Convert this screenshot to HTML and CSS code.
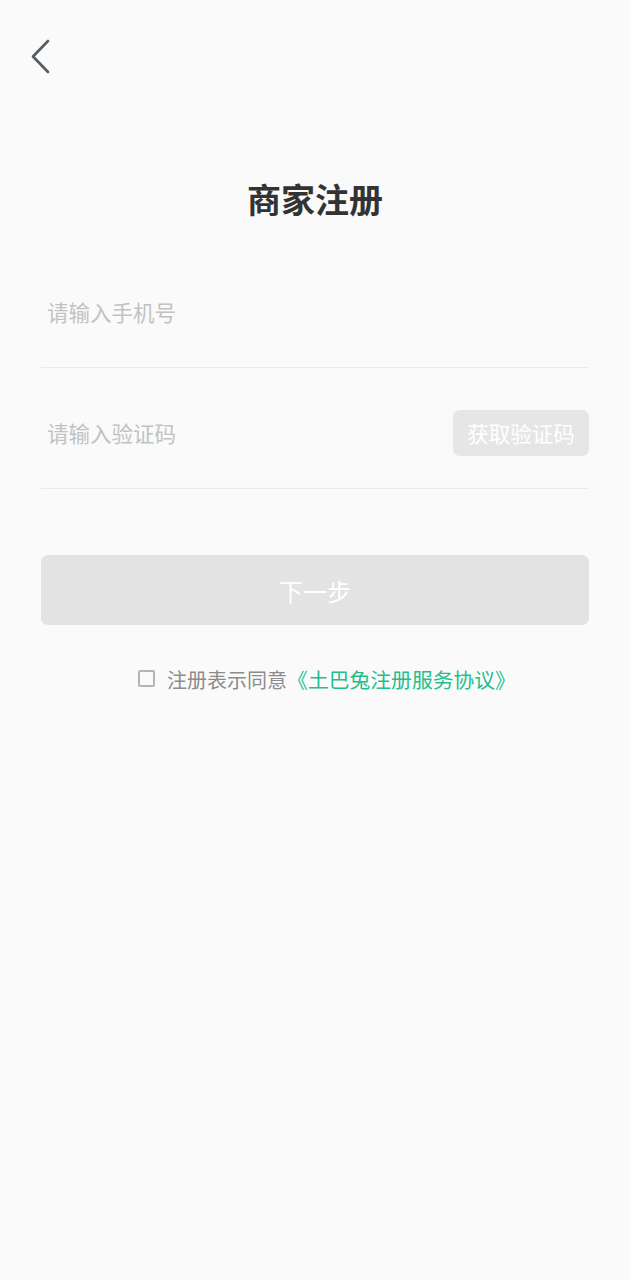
FILE: index.html
```html
<!DOCTYPE html>
<html lang="zh-CN">
<head>
<meta charset="utf-8">
<title>商家注册</title>
<link rel="stylesheet" href="styles.css">
</head>
<body>
<div class="page">
  <div class="topbar">
    <svg class="back" width="24" height="36" viewBox="0 0 24 36" aria-hidden="true">
      <polyline points="18,2 3,17.5 18,33" fill="none" stroke="#555b63" stroke-width="2.6" stroke-linecap="round" stroke-linejoin="round"/>
    </svg>
  </div>
  <h1 class="title">商家注册</h1>
  <div class="form">
    <div class="field">
      <input class="input" type="tel" placeholder="请输入手机号">
    </div>
    <div class="field">
      <input class="input" type="text" placeholder="请输入验证码">
      <button class="code-btn" type="button">获取验证码</button>
    </div>
    <button class="next-btn" type="button">下一步</button>
    <div class="agree">
      <span class="checkbox"></span>
      <span class="agree-text">注册表示同意</span><span class="agree-link">《土巴兔注册服务协议》</span>
    </div>
  </div>
</div>
</body>
</html>
```
FILE: styles.css
```css
html, body {
  margin: 0;
  padding: 0;
  background: #fafafa;
}
body {
  font-family: "Noto Sans CJK SC", "Noto Sans", sans-serif;
  color: #333;
}
.page {
  width: 630px;
  min-height: 1280px;
}
.topbar {
  height: 179px;
  padding-left: 30px;
  padding-top: 39px;
  box-sizing: border-box;
}
.back {
  display: block;
}
.title {
  margin: 0;
  text-align: center;
  font-size: 34px;
  line-height: 40px;
  font-weight: 700;
  color: #333;
}
.form {
  padding: 0 41px;
  margin-top: 28px;
}
.field {
  display: flex;
  align-items: center;
  height: 70px;
  padding: 30px 0 20px;
  border-bottom: 1px solid #ebebeb;
}
.input {
  flex: 1;
  min-width: 0;
  border: none;
  outline: none;
  background: transparent;
  font-family: inherit;
  font-size: 21.5px;
  padding: 0 0 0 6px;
  margin-top: -2px;
  color: #333;
  height: 40px;
}
.input::placeholder {
  color: #c2c2c2;
}
.code-btn {
  width: 136px;
  height: 46px;
  border: none;
  border-radius: 7px;
  background: #e6e6e6;
  color: #fff;
  font-family: inherit;
  font-size: 21.5px;
  padding: 0;
  margin-top: -1px;
}
.next-btn {
  display: block;
  width: 100%;
  height: 70px;
  margin-top: 66px;
  border: none;
  border-radius: 7px;
  background: #e3e3e3;
  color: #fff;
  font-family: inherit;
  font-size: 24px;
  padding: 0;
}
.agree {
  margin-top: 39px;
  display: flex;
  align-items: center;
  justify-content: center;
  height: 30px;
  font-size: 20px;
  padding-left: 24px;
}
.checkbox {
  width: 13px;
  height: 13px;
  border: 2px solid #b5b5b5;
  border-radius: 2px;
  margin-right: 12px;
  margin-top: -2px;
}
.agree-text {
  color: #8c8c8c;
}
.agree-link {
  color: #1ebf8e;
  font-size: 20.8px;
}
```
